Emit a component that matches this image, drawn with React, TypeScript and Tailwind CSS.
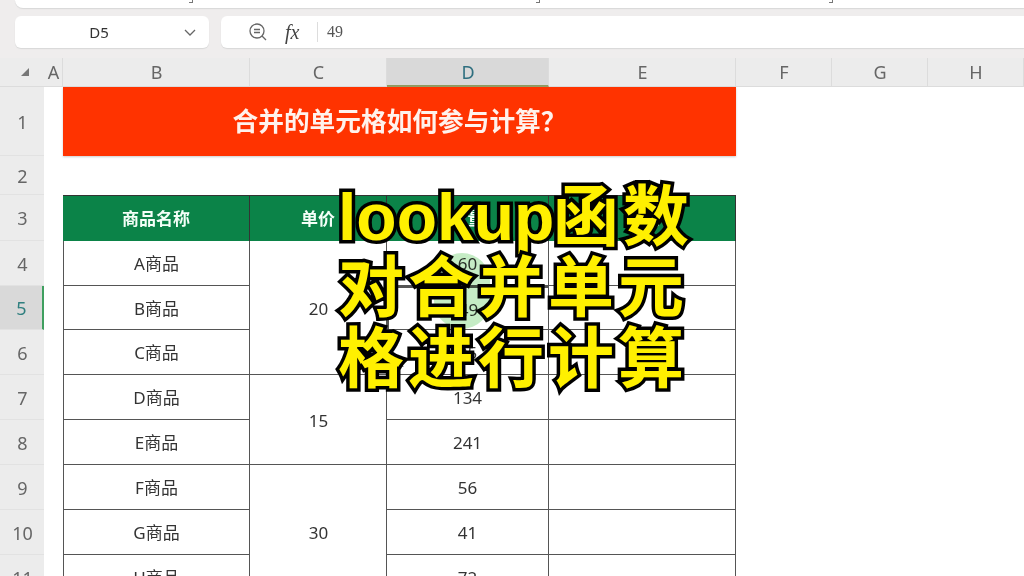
const font = "font-['Noto_Sans','Noto_Sans_CJK_SC',sans-serif]";
const colHeads: [string, boolean][] = [["A", false], ["B", false], ["C", false], ["D", true], ["E", false], ["F", false], ["G", false], ["H", false]];
const rowNums = ["1", "2", "3", "4", "5", "6", "7", "8", "9", "10", "11"];
const rows = [
  ["A商品", "60"],
  ["B商品", "49"],
  ["C商品", "95"],
  ["D商品", "134"],
  ["E商品", "241"],
  ["F商品", "56"],
  ["G商品", "41"],
  ["H商品", "72"],
];
const cell = "flex items-center justify-center border-r border-b border-[#555555] pt-[2px] text-[17px] text-[#333333]";

function Mark({ x }: { x: string }) {
  return <div className={`absolute top-0 ${x} h-[3px] w-[4px] border-r border-b border-[#777777]`} />;
}

export default function App() {
  return (
    <div className={`relative w-[1024px] h-[576px] overflow-hidden bg-[#efeded] ${font}`}>
      <div className="relative ml-[15px] h-[8px] rounded-bl-lg bg-white shadow-[0_1px_1px_#d8d8d8]">
        <Mark x="left-[174px]" />
        <Mark x="left-[521px]" />
        <Mark x="left-[814px]" />
      </div>
      <div className="flex h-[32px] mt-[8px] gap-[12px] pl-[15px]">
        <div className="relative flex w-[194px] items-center justify-center rounded-md bg-white pr-[26px] pt-[1px] text-[15px] text-[#333333] shadow-[0_1px_1px_#d8d8d8]">
          D5
          <svg className="absolute right-[12px] top-[13px]" width="14" height="8" viewBox="0 0 14 8" fill="none" stroke="#666666" strokeWidth="1.3"><path d="M2 1l5 5 5-5" /></svg>
        </div>
        <div className="flex flex-1 items-center bg-white pl-[27px] rounded-l-md text-[#444444] shadow-[0_1px_1px_#d8d8d8]">
          <svg width="20" height="20" viewBox="0 0 20 20" fill="none" stroke="#666666" strokeWidth="1.3"><circle cx="9" cy="9" r="7" /><path d="M14 14l4 4M6 7.5h6M6 10.5h6" /></svg>
          <span className="ml-[17px] w-[19px] text-[20px] italic leading-none text-[#444444] font-['Liberation_Serif',serif]">fx</span>
          <span className="ml-[13px] h-[20px] w-px bg-[#dddddd]" />
          <span className="ml-[9px] text-[16px] text-[#555555] font-['Liberation_Serif',serif]">49</span>
        </div>
      </div>
      <div className="mt-[10px] grid grid-cols-[44px_19px_187px_137px_162px_187px_96px_96px_96px] grid-rows-[29px_69px_39px_46px_45px_44px_45px_45px_45px_45px_45px_45px] bg-white">
        <div className="flex items-center justify-center bg-[#ececec] border-b border-[#dcdcdc] pl-[6px]">
          <svg width="10" height="10" viewBox="0 0 10 10"><path d="M9 1v8H1z" fill="#777777" /></svg>
        </div>
        {colHeads.map(([c, on]) => (
          <div key={c} className={`flex items-center justify-center border-r border-b pt-[1px] pl-[1px] text-[18px] ${on ? "bg-[#d9d9d9] border-r-[#dcdcdc] border-b-2 border-b-[#8f9a60] text-[#2f6f7f]" : "bg-[#ececec] border-[#dcdcdc] text-[#666666]"}`}>{c}</div>
        ))}
        {rowNums.map((n, i) => (
          <div key={n} style={{ gridColumn: 1, gridRow: i + 2 }} className={`flex items-center justify-center pt-[2px] pl-[1px] text-[18px] border-b border-[#e2e2e2] ${n === "5" ? "bg-[#d9d9d9] border-r-2 border-r-[#3f9f5f] text-[#2f7f7f]" : "bg-[#ececec] text-[#666666]"}`}>{n}</div>
        ))}
        <div className="col-start-3 col-span-4 row-start-2 flex items-center justify-center bg-[#ff3300] pt-[1px] text-[25.7px] font-bold text-[#fff2ec] shadow-[0_1px_2px_#cccccc]">合并的单元格如何参与计算？</div>
        {["商品名称", "单价", "数量", "金额"].map((h, i) => (
          <div key={h} style={{ gridColumn: i + 3, gridRow: 4 }} className="flex items-center justify-center border-t border-r border-[#333333] bg-[#0b8348] pt-[1px] text-[17px] font-bold text-[#f4fff8]">{h}</div>
        ))}
        {rows.map(([name, qty], i) => (
          <div key={name} className="contents">
            <div style={{ gridColumn: 3, gridRow: i + 5 }} className={`${cell} border-l`}>{name}</div>
            <div style={{ gridColumn: 5, gridRow: i + 5 }} className={`${cell} ${i === 1 ? "border-2 border-[#5fa87a]" : ""}`}>{qty}</div>
            <div style={{ gridColumn: 6, gridRow: i + 5 }} className={cell} />
          </div>
        ))}
        <div style={{ gridColumn: 4, gridRow: "5 / span 3" }} className={`${cell} pl-[1px]`}>20</div>
        <div style={{ gridColumn: 4, gridRow: "8 / span 2" }} className={`${cell} pl-[1px]`}>15</div>
        <div style={{ gridColumn: 4, gridRow: "10 / span 3" }} className={`${cell} pl-[1px]`}>30</div>
      </div>
      <div className="pointer-events-none absolute left-[434px] top-[253px] h-[76px] w-[56px] rounded-full bg-[#c5ecc5] mix-blend-multiply" />
      <div className="pointer-events-none absolute left-[338px] top-[182px] w-[370px] text-[66px] font-bold leading-[71px] tracking-[4px] text-[#fff000] [-webkit-text-stroke:7px_black] [paint-order:stroke_fill] font-['Liberation_Sans','Noto_Sans_CJK_SC',sans-serif]">
        <div className="flex items-center whitespace-nowrap"><span className="w-[215px] tracking-normal">lookup</span><span>函数</span></div>
        <div className="whitespace-nowrap">对合并单元</div>
        <div className="whitespace-nowrap">格进行计算</div>
      </div>
    </div>
  );
}
